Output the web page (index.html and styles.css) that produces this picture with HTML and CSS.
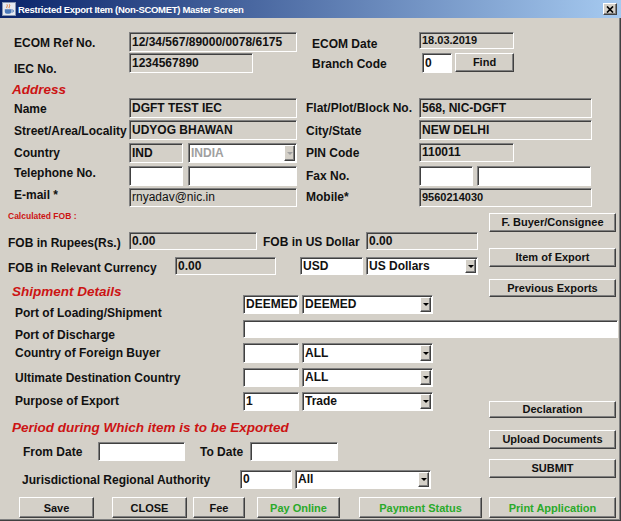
FILE: index.html
```html
<!DOCTYPE html>
<html>
<head>
<meta charset="utf-8">
<title>Restricted Export Item (Non-SCOMET) Master Screen</title>
<link rel="stylesheet" href="styles.css">
</head>
<body>
<div class="window">
  <div class="titlebar">
    <svg class="app-icon" viewBox="0 0 14 14" width="14" height="14">
      <rect x="0.5" y="0.5" width="13" height="13" fill="#e6eaf1" stroke="#8796b0"/>
      <path d="M5 6.2c-1.2-1 1.2-2 0-3.8M7.4 6.2c-1.2-1 1.2-2 0-3.8" stroke="#e0762a" stroke-width="1" fill="none"/>
      <path d="M2.8 7.2h6.4v2.6a2 2 0 0 1-2 2H4.8a2 2 0 0 1-2-2z" fill="#4a78b8"/>
      <path d="M9.2 8h1.3a1 1 0 0 1 0 2H9.2" fill="none" stroke="#4a78b8" stroke-width="1"/>
    </svg>
    <span class="title">Restricted Export Item (Non-SCOMET) Master Screen</span>
    <span class="close-btn">
      <svg width="8" height="7" viewBox="0 0 8 7"><path d="M1 0.5l6 6M7 0.5l-6 6" stroke="#000" stroke-width="1.7"/></svg>
    </span>
  </div>

  <div class="form">
    <div class="row rh21">
      <span class="lbl lbl-l dy1">ECOM Ref No.</span>
      <span class="fld ro w168 h20">12/34/567/89000/0078/6175</span>
      <span class="lbl lbl-ecomdate dy2">ECOM Date</span>
      <span class="fld ro w95 h17 sm">18.03.2019</span>
    </div>
    <div class="row rh21">
      <span class="lbl lbl-l dy6">IEC No.</span>
      <span class="fld ro w124 h20">1234567890</span>
      <span class="lbl lbl-branch dy1">Branch Code</span>
      <span class="fld wh w30 h20">0</span>
      <span class="btn ml3 w59 h19">Find</span>
    </div>
    <div class="row rh24">
      <span class="hdr hdr-addr">Address</span>
    </div>
    <div class="row rh22">
      <span class="lbl lbl-l dy1">Name</span>
      <span class="fld ro w168 h20">DGFT TEST IEC</span>
      <span class="lbl lbl-r">Flat/Plot/Block No.</span>
      <span class="fld ro w173 h20">568, NIC-DGFT</span>
    </div>
    <div class="row rh23">
      <span class="lbl lbl-l dy1">Street/Area/Locality</span>
      <span class="fld ro w168 h20">UDYOG BHAWAN</span>
      <span class="lbl lbl-r dy1">City/State</span>
      <span class="fld ro w173 h20">NEW DELHI</span>
    </div>
    <div class="row rh23">
      <span class="lbl lbl-l">Country</span>
      <span class="fld ro w54 h20">IND</span>
      <span class="dd dis ml5 w109 h20"><span class="dd-text">INDIA</span><span class="dd-btn"></span></span>
      <span class="lbl lbl-r">PIN Code</span>
      <span class="fld ro w95 h19">110011</span>
    </div>
    <div class="row rh22">
      <span class="lbl lbl-l dy-3">Telephone No.</span>
      <span class="fld wh w54 h20"></span>
      <span class="fld wh ml5 w109 h20"></span>
      <span class="lbl lbl-r">Fax No.</span>
      <span class="fld wh w54 h20"></span>
      <span class="fld wh ml4 w114 h20"></span>
    </div>
    <div class="row rh20">
      <span class="lbl lbl-l dy-3">E-mail *</span>
      <span class="fld ro w168 h19 reg">rnyadav@nic.in</span>
      <span class="lbl lbl-r dy-1">Mobile*</span>
      <span class="fld ro w173 h19 sm">9560214030</span>
    </div>

    <div class="lower">
      <div class="lower-left">
        <div class="row rh24">
          <span class="calc">Calculated FOB :</span>
        </div>
        <div class="row rh25">
          <span class="lbl lbl-fob dy1">FOB in Rupees(Rs.)</span>
          <span class="fld ro w128 h18">0.00</span>
          <span class="lbl lbl-fobusd">FOB in US Dollar</span>
          <span class="fld ro w112 h18">0.00</span>
        </div>
        <div class="row rh27">
          <span class="lbl lbl-fobrel dy1">FOB in Relevant Currency</span>
          <span class="fld ro w101 h18">0.00</span>
          <span class="fld wh ml24 w63 h18">USD</span>
          <span class="dd ml3 w112 h18"><span class="dd-text">US Dollars</span><span class="dd-btn"></span></span>
        </div>
        <div class="row rh11">
          <span class="hdr">Shipment Details</span>
        </div>
        <div class="row rh25">
          <span class="lbl lbl-ship dy8">Port of Loading/Shipment</span>
          <span class="fld wh w56 h19">DEEMED</span>
          <span class="dd ml3 w131 h19"><span class="dd-text">DEEMED</span><span class="dd-btn"></span></span>
        </div>
        <div class="row rh23">
          <span class="lbl lbl-ship dy5">Port of Discharge</span>
          <span class="fld wh w375 h18"></span>
        </div>
        <div class="row rh25">
          <span class="lbl lbl-ship">Country of Foreign Buyer</span>
          <span class="fld wh w56 h20"></span>
          <span class="dd ml3 w131 h20"><span class="dd-text">ALL</span><span class="dd-btn"></span></span>
        </div>
        <div class="row rh24">
          <span class="lbl lbl-ship">Ultimate Destination Country</span>
          <span class="fld wh w56 h19"></span>
          <span class="dd ml3 w131 h19"><span class="dd-text">ALL</span><span class="dd-btn"></span></span>
        </div>
        <div class="row rh28">
          <span class="lbl lbl-ship dy-1">Purpose of Export</span>
          <span class="fld wh w56 h19">1</span>
          <span class="dd ml3 w131 h19"><span class="dd-text">Trade</span><span class="dd-btn"></span></span>
        </div>
        <div class="row rh22">
          <span class="hdr">Period during Which item is to be Exported</span>
        </div>
        <div class="row rh28">
          <span class="lbl lbl-from">From Date</span>
          <span class="fld wh w87 h19"></span>
          <span class="lbl lbl-to">To Date</span>
          <span class="fld wh w88 h19"></span>
        </div>
        <div class="row rh20">
          <span class="lbl lbl-jur">Jurisdictional Regional Authority</span>
          <span class="fld wh w52 h19">0</span>
          <span class="dd ml3 w136 h19"><span class="dd-text">All</span><span class="dd-btn"></span></span>
        </div>
      </div>

      <div class="side">
        <span class="btn h19 s-buyer">F. Buyer/Consignee</span>
        <span class="btn h19 s-item">Item of Export</span>
        <span class="btn h18 s-prev">Previous Exports</span>
        <span class="btn h17 s-decl">Declaration</span>
        <span class="btn h19 s-upload">Upload Documents</span>
        <span class="btn h19 s-submit">SUBMIT</span>
      </div>
    </div>

    <div class="bottom">
      <span class="btn b-save">Save</span>
      <span class="btn b-close">CLOSE</span>
      <span class="btn b-fee">Fee</span>
      <span class="btn green b-pay">Pay Online</span>
      <span class="btn green b-status">Payment Status</span>
      <span class="btn green b-print">Print Application</span>
    </div>
  </div>
</div>
</body>
</html>
```
FILE: styles.css
```css
* { box-sizing: border-box; }
html, body { margin: 0; padding: 0; }
body {
  background: #d4d0c8;
  font-family: "Liberation Sans", Arial, sans-serif;
  color: #111;
}
.window {
  width: 621px;
  height: 521px;
  background: #d4d0c8;
  overflow: hidden;
  box-shadow: inset -1px -1px 0 #404040, inset -2px -2px 0 #808080;
}

/* title bar */
.titlebar {
  height: 18px;
  display: flex;
  align-items: center;
  background: linear-gradient(to right, #0a246a, #a6caf0);
}
.app-icon { flex: none; margin-left: 2px; }
.title {
  margin-left: 2px;
  color: #fff;
  font-weight: bold;
  font-size: 9.5px;
  letter-spacing: -0.3px;
  white-space: nowrap;
}
.close-btn {
  margin-left: auto;
  margin-right: 4px;
  width: 14px;
  height: 12px;
  background: #d4d0c8;
  border: 1px solid;
  border-color: #fff #404040 #404040 #fff;
  box-shadow: inset -1px -1px 0 #808080;
  display: flex;
  align-items: center;
  justify-content: center;
}

/* form layout */
.form { padding-top: 14px; }
.row { display: flex; align-items: flex-start; }
.row > * { flex: none; }
.rh11 { height: 11px; }
.rh20 { height: 20px; }
.rh21 { height: 21px; }
.rh22 { height: 22px; }
.rh23 { height: 23px; }
.rh24 { height: 24px; }
.rh25 { height: 25px; }
.rh27 { height: 27px; }
.rh28 { height: 28px; }

.lower { display: flex; align-items: flex-start; }
.lower-left { width: 481px; flex: none; }
.side {
  flex: none;
  width: 127px;
  margin-left: 8px;
  display: flex;
  flex-direction: column;
}

/* labels */
.lbl {
  font-weight: bold;
  font-size: 12px;
  line-height: 20px;
  height: 20px;
  white-space: nowrap;
  color: #111;
}
.lbl-l { margin-left: 14px; width: 115px; }
.lbl-r { margin-left: 9px; width: 113px; }
.lbl-ecomdate { margin-left: 15px; width: 107px; }
.lbl-branch { margin-left: 59px; width: 110px; }
.lbl-fob { margin-left: 8px; width: 121px; }
.lbl-fobusd { margin-left: 6px; width: 103px; }
.lbl-fobrel { margin-left: 8px; width: 167px; }
.lbl-ship { margin-left: 15px; width: 228px; }
.lbl-from { margin-left: 23px; width: 75px; }
.lbl-to { margin-left: 15px; width: 50px; }
.lbl-jur { margin-left: 22px; width: 218px; }

.dy-3 { margin-top: -3px; }
.dy-1 { margin-top: -1px; }
.dy1 { margin-top: 1px; }
.dy2 { margin-top: 2px; }
.dy5 { margin-top: 5px; }
.dy6 { margin-top: 6px; }
.dy8 { margin-top: 8px; }

.hdr {
  margin-left: 12px;
  color: #cc1414;
  font-style: italic;
  font-weight: bold;
  font-size: 13.5px;
  line-height: 16px;
  white-space: nowrap;
}
.hdr-addr { margin-top: 8px; }
.calc {
  margin: 2px 0 0 8px;
  color: #cc1414;
  font-weight: bold;
  font-size: 8.5px;
  line-height: 12px;
  white-space: nowrap;
}

/* fields */
.fld, .dd {
  border: 1px solid;
  border-color: #808080 #fff #fff #808080;
  box-shadow: inset 1px 1px 0 #404040;
  font-weight: bold;
  font-size: 12px;
  white-space: nowrap;
  overflow: hidden;
  color: #111;
}
.fld { padding: 0 1px 0 2px; }
.ro { background: #d4d0c8; }
.wh { background: #fff; }
.sm { font-size: 11px; }
.reg { font-weight: normal; }

.dd {
  background: #fff;
  display: flex;
  align-items: stretch;
  padding-left: 2px;
}
.dd-text { flex: 1; overflow: hidden; }
.dd-btn {
  flex: none;
  width: 11px;
  margin: 1px 1px 1px 0;
  background: #d4d0c8;
  border: 1px solid;
  border-color: #fff #404040 #404040 #fff;
  box-shadow: inset -1px -1px 0 #808080;
  display: flex;
  align-items: center;
  justify-content: center;
}
.dd-btn::after {
  content: "";
  border-left: 3px solid transparent;
  border-right: 3px solid transparent;
  border-top: 3px solid #000;
}
.dis .dd-text { color: #a0a0a0; }
.dis .dd-btn::after { border-top-color: #a0a0a0; }

.h17 { height: 17px; line-height: 15px; }
.h18 { height: 18px; line-height: 16px; }
.h19 { height: 19px; line-height: 17px; }
.h20 { height: 20px; line-height: 18px; }

.w30 { width: 30px; }
.w52 { width: 52px; }
.w54 { width: 54px; }
.w56 { width: 56px; }
.w59 { width: 59px; }
.w63 { width: 63px; }
.w87 { width: 87px; }
.w88 { width: 88px; }
.w95 { width: 95px; }
.w101 { width: 101px; }
.w109 { width: 109px; }
.w112 { width: 112px; }
.w114 { width: 114px; }
.w124 { width: 124px; }
.w128 { width: 128px; }
.w131 { width: 131px; }
.w136 { width: 136px; }
.w168 { width: 168px; }
.w173 { width: 173px; }
.w375 { width: 375px; }

.ml3 { margin-left: 3px; }
.ml4 { margin-left: 4px; }
.ml5 { margin-left: 5px; }
.ml24 { margin-left: 24px; }

/* buttons */
.btn {
  background: #d4d0c8;
  border: 1px solid;
  border-color: #fff #404040 #404040 #fff;
  box-shadow: inset -1px -1px 0 #808080;
  font-weight: bold;
  font-size: 11px;
  color: #111;
  white-space: nowrap;
  display: flex;
  align-items: center;
  justify-content: center;
}
.btn.green { color: #2aaa2a; }

.s-buyer { margin-top: 5px; }
.s-item { margin-top: 16px; }
.s-prev { margin-top: 12px; }
.s-decl { margin-top: 104px; }
.s-upload { margin-top: 12px; }
.s-submit { margin-top: 10px; }

.bottom {
  display: flex;
  margin-top: 7px;
  height: 21px;
}
.bottom .btn { flex: none; height: 21px; }
.b-save { margin-left: 19px; width: 75px; }
.b-close { margin-left: 18px; width: 75px; }
.b-fee { margin-left: 6px; width: 52px; }
.b-pay { margin-left: 12px; width: 83px; }
.b-status { margin-left: 19px; width: 123px; }
.b-print { margin-left: 7px; width: 127px; }
```
